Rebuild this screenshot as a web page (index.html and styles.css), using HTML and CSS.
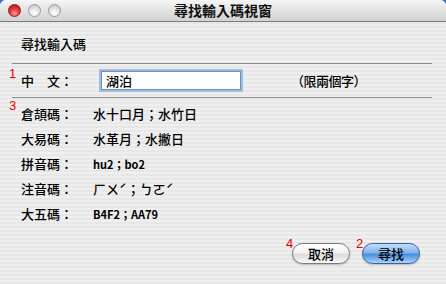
FILE: index.html
```html
<!DOCTYPE html>
<html lang="zh-Hant">
<head>
    <meta charset="UTF-8" />
    <title>尋找輸入碼視窗</title>
    <link rel="stylesheet" href="styles.css">
</head>
<body>

    <div class="window">
        <div class="titlebar">
            <div class="lights">
                <span class="light close"></span>
                <span class="light"></span>
                <span class="light"></span>
            </div>
            <div class="title">尋找輸入碼視窗</div>
        </div>

        <div class="content">
            <div class="heading">尋找輸入碼</div>
            <div class="rule"></div>

            <div class="form-row">
                <span class="mark mark-1">1</span>
                <span class="label">中　文：</span>
                <input type="text" class="hanzi" value="湖泊" />
                <span class="note">（限兩個字）</span>
            </div>
            <div class="rule"></div>

            <div class="codes">
                <span class="mark mark-3">3</span>
                <div class="code-row"><span class="label">倉頡碼：</span><span class="value">水十口月；水竹日</span></div>
                <div class="code-row"><span class="label">大易碼：</span><span class="value">水革月；水撇日</span></div>
                <div class="code-row"><span class="label">拼音碼：</span><span class="value small">hu2；bo2</span></div>
                <div class="code-row"><span class="label">注音碼：</span><span class="value">ㄏㄨˊ；ㄅㄛˊ</span></div>
                <div class="code-row"><span class="label">大五碼：</span><span class="value small">B4F2；AA79</span></div>
            </div>

            <div class="buttons">
                <div class="btn-wrap">
                    <span class="mark mark-btn">4</span>
                    <button class="pill">取消</button>
                </div>
                <div class="btn-wrap">
                    <span class="mark mark-btn">2</span>
                    <button class="pill default">尋找</button>
                </div>
            </div>
        </div>
    </div>

</body>
</html>
```

FILE: styles.css
```css
body {
    margin: 0;
    width: 446px;
    height: 284px;
    overflow: hidden;
    background: #3d6fc4;
    font-family: "Noto Sans CJK TC", "Liberation Sans", sans-serif;
    color: #000;
}

.window {
    width: 446px;
    height: 284px;
    border-radius: 6px 6px 0 0;
    overflow: hidden;
    background: repeating-linear-gradient(to bottom, #efefef 0, #efefef 2px, #e7e7e7 2px, #e7e7e7 4px);
}

.titlebar {
    position: relative;
    height: 21px;
    background: linear-gradient(to bottom, #f6f6f6, #e2e2e2 50%, #d2d2d2);
    border-bottom: 1px solid #7c7c7c;
    display: flex;
    align-items: center;
}

.lights {
    display: flex;
    gap: 7px;
    padding-left: 8px;
}

.light {
    width: 13px;
    height: 13px;
    border-radius: 50%;
    box-sizing: border-box;
    border: 1px solid #9a9a9a;
    background: radial-gradient(circle at 50% 75%, #ffffff 0, #e8e8e8 45%, #b9b9b9 100%);
}

.light.close {
    border-color: #8a1a1a;
    background: radial-gradient(circle at 50% 75%, #ff9a9a 0, #e43a3a 45%, #a01010 100%);
}

.title {
    position: absolute;
    left: 0;
    right: 0;
    top: 0;
    line-height: 21px;
    text-align: center;
    font-size: 14px;
    font-weight: bold;
    color: #111;
    pointer-events: none;
}

.content {
    padding: 12px 14px 0 12px;
    font-size: 13px;
    font-weight: 500;
}

.heading {
    padding-left: 9px;
    line-height: 20px;
    margin-bottom: 9px;
}

.rule {
    height: 1px;
    background: #8e8e8e;
    width: 420px;
}

.mark {
    position: absolute;
    color: #e00000;
    font-family: "Liberation Sans", sans-serif;
    font-size: 13px;
    font-weight: normal;
}

.form-row {
    position: relative;
    display: flex;
    align-items: center;
    height: 33px;
    padding-left: 9px;
}

.mark-1 {
    left: -3px;
    top: 2px;
}

.mark-3 {
    left: -3px;
    top: 0;
}

.form-row .label {
    width: 80px;
}

.hanzi {
    width: 140px;
    height: 19px;
    box-sizing: border-box;
    padding: 0 4px;
    font-family: inherit;
    font-size: 13px;
    font-weight: 500;
    border: 1px solid #6e8fb3;
    box-shadow: 0 0 0 2px #9fbde0;
    outline: none;
    background: #fff;
}

.note {
    margin-left: 50px;
    letter-spacing: -0.5px;
}

.codes {
    position: relative;
    padding: 3px 0 0 9px;
}

.code-row {
    display: flex;
    align-items: center;
    height: 25px;
}

.code-row .label {
    width: 72px;
}

.value.small {
    font-size: 11px;
    font-weight: bold;
}

.buttons {
    display: flex;
    justify-content: flex-end;
    gap: 12px;
    padding-right: 12px;
    margin-top: 17px;
}

.btn-wrap {
    position: relative;
}

.mark-btn {
    left: -6px;
    top: -7px;
}

.pill {
    width: 58px;
    height: 21px;
    border-radius: 11px;
    border: 1px solid #7a7a7a;
    font-family: inherit;
    font-size: 13px;
    font-weight: 500;
    padding: 0;
    line-height: 19px;
    color: #000;
    background: linear-gradient(to bottom, #ffffff 0, #f2f2f2 45%, #dcdcdc 55%, #f8f8f8 100%);
    box-shadow: 0 1px 2px rgba(0,0,0,0.25);
}

.pill.default {
    border-color: #3b5f9a;
    background: linear-gradient(to bottom, #c6def8 0, #7fb2ec 45%, #4c8ee0 55%, #a8d4fb 100%);
}
```
